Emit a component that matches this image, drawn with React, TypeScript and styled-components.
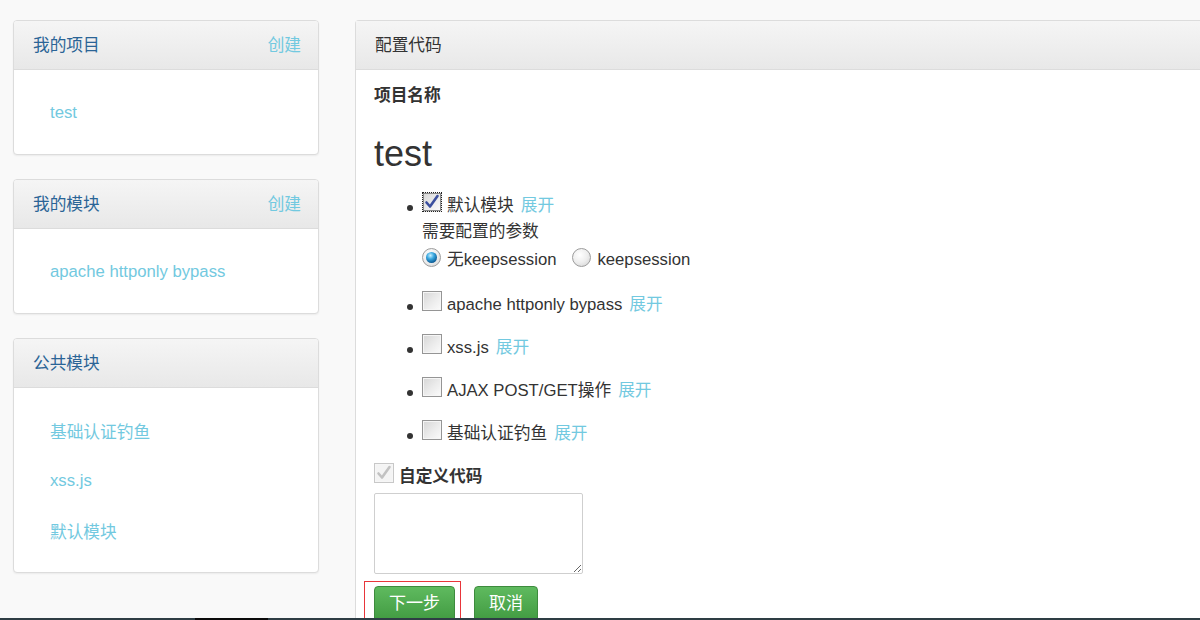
import React from "react";
import styled, { createGlobalStyle } from "styled-components";

const Global = createGlobalStyle`
  html, body { margin: 0; padding: 0; background: #f9f9f9; }
  body {
    font-family: "Liberation Sans", Arial, "Noto Sans CJK SC", sans-serif;
    font-size: 16.7px;
    color: #333;
  }
  * { box-sizing: border-box; }
`;

const Page = styled.div`
  width: 1200px;
  height: 620px;
  display: flex;
  flex-direction: column;
  overflow: hidden;
  background: #f9f9f9;
`;

const Main = styled.div`
  flex: 1;
  min-height: 0;
  overflow: hidden;
  display: flex;
  align-items: flex-start;
  gap: 36px;
  padding: 20px 0 0 13px;
`;

const BottomBar = styled.div`
  height: 2px;
  flex: none;
  background: linear-gradient(
    to right,
    #2e3d44 0,
    #2e3d44 195px,
    #0b0b0b 195px,
    #0b0b0b 268px,
    #2e3d44 268px
  );
`;

const Sidebar = styled.div`
  width: 306px;
  flex: none;
  display: flex;
  flex-direction: column;
  gap: 24px;
`;

const Panel = styled.div`
  background: #fff;
  border: 1px solid #dcdcdc;
  border-radius: 4px;
  box-shadow: 0 1px 2px rgba(0, 0, 0, 0.06);
  overflow: hidden;
`;

const PanelHeader = styled.div<{ $dark?: boolean }>`
  height: 49px;
  display: flex;
  align-items: center;
  justify-content: space-between;
  padding: 2px 17px 0 19px;
  border-bottom: 1px solid #dcdcdc;
  background: linear-gradient(#f5f5f5, #e8e8e8);
  font-size: 16.7px;
  line-height: 20px;
  color: ${(p) => (p.$dark ? "#333" : "#2a6496")};
`;

const HeaderLink = styled.a`
  color: #72c9e0;
  text-decoration: none;
`;

const NavList = styled.ul`
  list-style: none;
  margin: 0;
  padding: 17px 0;
`;

const NavItem = styled.li`
  height: 50px;
  display: flex;
  align-items: center;
  padding: 2px 0 0 36px;
`;

const NavLink = styled.a`
  color: #72c9e0;
  text-decoration: none;
  font-size: 16.7px;
`;

const ConfigPanel = styled.div`
  width: 900px;
  flex: none;
  background: #fff;
  border: 1px solid #dcdcdc;
  border-right: none;
  border-bottom: none;
  border-radius: 4px 0 0 0;
  min-height: 700px;
`;

const ConfigBody = styled.div`
  padding: 14px 18px;
`;

const FieldLabel = styled.div`
  font-weight: bold;
  font-size: 16.7px;
  line-height: 22px;
  padding-top: 1px;
`;

const ProjectName = styled.h2`
  margin: 27px 0 0;
  font-size: 36px;
  line-height: 40px;
  font-weight: normal;
  color: #333;
`;

const ModuleList = styled.ul`
  list-style: none;
  margin: 18px 0 0 30px;
  padding: 0;
`;

const ModuleItem = styled.li`
  display: flex;
  margin-bottom: 17px;
`;

const BulletCol = styled.span`
  width: 18px;
  height: 26px;
  flex: none;
  display: flex;
  align-items: center;
  padding-left: 3px;
  &::before {
    content: "";
    width: 6px;
    height: 6px;
    margin-top: 5px;
    border-radius: 50%;
    background: #333;
  }
`;

const ItemBody = styled.div`
  display: flex;
  flex-direction: column;
`;

const Row = styled.div<{ $h: number }>`
  display: flex;
  align-items: flex-start;
  height: ${(p) => p.$h}px;
  padding-top: 2px;
  line-height: ${(p) => p.$h - 2}px;
  white-space: nowrap;
`;

const Box = styled.span<{ $focus?: boolean; $disabled?: boolean }>`
  width: 20px;
  height: 20px;
  flex: none;
  margin-top: -2px;
  margin-right: 5px;
  display: inline-flex;
  align-items: center;
  justify-content: center;
  border-width: 1px;
  border-style: ${(p) => (p.$focus ? "dotted" : "solid")};
  border-color: ${(p) => (p.$disabled ? "#c8c8c8" : p.$focus ? "#222" : "#959595")};
  background: ${(p) =>
    p.$disabled
      ? "#f4f4f4"
      : "linear-gradient(135deg, #d6d6d6 0%, #ececec 55%, #fbfbfb 100%)"};
  box-shadow: inset 0 0 0 1px ${(p) => (p.$focus ? "#8a8a8a" : "#f6f6f6")};
`;

const Radio = styled.span<{ $checked?: boolean }>`
  width: 19px;
  height: 19px;
  flex: none;
  margin-top: 3px;
  margin-right: 6px;
  border-radius: 50%;
  border: 1px solid #9c9c9c;
  background: radial-gradient(circle at 40% 35%, #ffffff 0%, #eeeeee 50%, #cfcfcf 100%);
  display: inline-flex;
  align-items: center;
  justify-content: center;
  &::after {
    content: "";
    display: ${(p) => (p.$checked ? "block" : "none")};
    width: 11px;
    height: 11px;
    border-radius: 50%;
    background: radial-gradient(circle at 40% 32%, #c8f0ff 0%, #3aa8e0 35%, #0c5a94 75%, #083a66 100%);
  }
`;

const RadioLabel = styled.span`
  margin-right: 16px;
`;

const Expand = styled.a`
  color: #72c9e0;
  text-decoration: none;
  margin-left: 7px;
`;

const CustomRow = styled.div`
  display: flex;
  align-items: flex-start;
  height: 26px;
  padding-top: 2px;
  line-height: 24px;
  font-weight: bold;
`;

const CodeArea = styled.textarea`
  display: block;
  margin-top: 4px;
  width: 209px;
  height: 81px;
  border: 1px solid #cfcfcf;
  border-radius: 2px;
  resize: both;
  background: #fff;
  font-family: "Liberation Mono", monospace;
`;

const Buttons = styled.div`
  display: flex;
  align-items: flex-end;
  margin-top: 7px;
  margin-left: -10px;
  gap: 13px;
`;

const Highlight = styled.div`
  border: 1px solid #e8353a;
  border-bottom: none;
  padding: 4px 5px 0 9px;
`;

const GreenButton = styled.button<{ $w: number }>`
  width: ${(p) => p.$w}px;
  height: 36px;
  border: 1px solid #3d8b3d;
  border-radius: 4px;
  background: linear-gradient(#5fba5f, #419a41);
  color: #fff;
  font-family: "Liberation Sans", "Noto Sans CJK SC", sans-serif;
  font-size: 17px;
  padding: 0;
  line-height: 34px;
  cursor: pointer;
`;

const Check = ({ color }: { color: string }) => (
  <svg width="16" height="16" viewBox="0 0 16 16">
    <path
      d="M2.5 8.5 L6 12.5 L13.5 2"
      fill="none"
      stroke={color}
      strokeWidth="2.6"
      strokeLinecap="round"
      strokeLinejoin="round"
    />
  </svg>
);

const modules = ["apache httponly bypass", "xss.js", "AJAX POST/GET操作", "基础认证钓鱼"];

export default function App() {
  return (
    <Page>
      <Global />
      <Main>
        <Sidebar>
          <Panel>
            <PanelHeader>
              <span>我的项目</span>
              <HeaderLink href="#">创建</HeaderLink>
            </PanelHeader>
            <NavList>
              <NavItem>
                <NavLink href="#">test</NavLink>
              </NavItem>
            </NavList>
          </Panel>
          <Panel>
            <PanelHeader>
              <span>我的模块</span>
              <HeaderLink href="#">创建</HeaderLink>
            </PanelHeader>
            <NavList>
              <NavItem>
                <NavLink href="#">apache httponly bypass</NavLink>
              </NavItem>
            </NavList>
          </Panel>
          <Panel>
            <PanelHeader>
              <span>公共模块</span>
            </PanelHeader>
            <NavList>
              <NavItem>
                <NavLink href="#">基础认证钓鱼</NavLink>
              </NavItem>
              <NavItem>
                <NavLink href="#">xss.js</NavLink>
              </NavItem>
              <NavItem>
                <NavLink href="#">默认模块</NavLink>
              </NavItem>
            </NavList>
          </Panel>
        </Sidebar>

        <ConfigPanel>
          <PanelHeader $dark>
            <span>配置代码</span>
          </PanelHeader>
          <ConfigBody>
            <FieldLabel>项目名称</FieldLabel>
            <ProjectName>test</ProjectName>
            <ModuleList>
              <ModuleItem>
                <BulletCol />
                <ItemBody>
                  <Row $h={26}>
                    <Box $focus>
                      <Check color="#3b4f9e" />
                    </Box>
                    默认模块<Expand href="#">展开</Expand>
                  </Row>
                  <Row $h={25}>需要配置的参数</Row>
                  <Row $h={31}>
                    <Radio $checked />
                    <RadioLabel>无keepsession</RadioLabel>
                    <Radio />
                    <span>keepsession</span>
                  </Row>
                </ItemBody>
              </ModuleItem>
              {modules.map((m) => (
                <ModuleItem key={m}>
                  <BulletCol />
                  <ItemBody>
                    <Row $h={26}>
                      <Box />
                      {m}
                      <Expand href="#">展开</Expand>
                    </Row>
                  </ItemBody>
                </ModuleItem>
              ))}
            </ModuleList>
            <CustomRow>
              <Box $disabled>
                <Check color="#c2c2c2" />
              </Box>
              自定义代码
            </CustomRow>
            <CodeArea />
            <Buttons>
              <Highlight>
                <GreenButton $w={81}>下一步</GreenButton>
              </Highlight>
              <GreenButton $w={64}>取消</GreenButton>
            </Buttons>
          </ConfigBody>
        </ConfigPanel>
      </Main>
      <BottomBar />
    </Page>
  );
}
